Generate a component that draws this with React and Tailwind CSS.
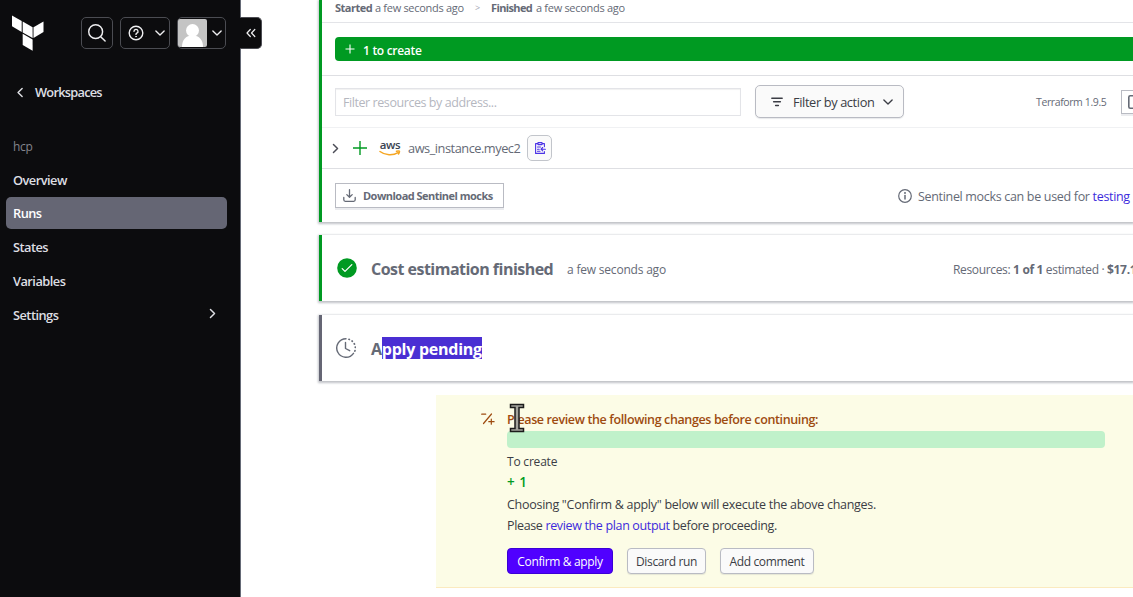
import React from "react";

const Chevron = ({ d, className, w = 1.8 }) => (
  <svg viewBox="0 0 16 16" className={className} fill="none" stroke="currentColor" strokeWidth={w} strokeLinecap="round" strokeLinejoin="round">
    <path d={d} />
  </svg>
);
const DOWN = "M2.500 5.300l5.500 5.500 5.500-5.500";
const LEFT = "M10 3L5 8l5 5";
const RIGHT = "M5.500 3l5 5-5 5";

function NavItem({ label, active, arrow }) {
  return (
    <div
      className={
        active
          ? "flex h-8 items-center justify-between rounded-[5px] bg-[#656674] pb-px pl-[7px] pr-2 text-white"
          : "flex h-8 items-center justify-between rounded-[5px] pl-[7px] pr-2 text-[#dedfe3]"
      }
    >
      <span className="pt-[3px] text-[12.8px] font-semibold tracking-[-0.520px]">{label}</span>
      {arrow && <Chevron d={RIGHT} className="size-[13px]" />}
    </div>
  );
}

function Sidebar() {
  return (
    <aside className="relative h-full w-[241px] shrink-0 border-r border-[#656a76] bg-[#0c0c0e]">
      <div className="flex h-[66px] items-center pl-3">
        <svg viewBox="0 0 32 37" className="h-[37px] w-8" fill="#fff">
          <path d="M0 0.500L9.700 6.100V16.900L0 11.300Z" />
          <path d="M10.700 6.400L20.600 12.200V23.100L10.700 17.400Z" />
          <path d="M21.500 12.200L31.500 6.400V17L21.500 23Z" />
          <path d="M10.700 18.800L20.600 24.600V35.800L10.700 30Z" />
        </svg>
        <div className="ml-[37px] flex h-8 w-8 items-center justify-center rounded-[5px] border border-[#4b4c52] text-[#efeff1]">
          <svg viewBox="0 0 20 20" className="size-[18px]" fill="none" stroke="currentColor" strokeWidth="1.600" strokeLinecap="round">
            <circle cx="8.500" cy="8.500" r="7.700" />
            <path d="M14.100 14.100L19 19" />
          </svg>
        </div>
        <div className="ml-[7px] flex h-8 w-[50px] items-center justify-between rounded-[5px] border border-[#4b4c52] pl-[7px] pr-[3px] text-[#efeff1]">
          <svg viewBox="0 0 16 16" className="size-4" fill="none" stroke="currentColor" strokeWidth="1.400" strokeLinecap="round">
            <circle cx="8" cy="8" r="6.800" />
            <path d="M6 6.300a2 2 0 1 1 2.800 1.900c-.6.300-.8.600-.8 1.200" />
            <circle cx="8" cy="11.600" r=".4" fill="currentColor" strokeWidth=".8" />
          </svg>
          <Chevron d={DOWN} className="size-3" />
        </div>
        <div className="ml-[7px] flex h-8 w-[49px] items-center justify-between rounded-[5px] border border-[#4b4c52] pr-[2px] text-[#efeff1]">
          <svg viewBox="0 0 29 28" className="h-7 w-[29px]">
            <rect width="29" height="28" rx="2" fill="#c4c4c4" />
            <circle cx="14.500" cy="11.500" r="6.500" fill="#fff" />
            <path d="M4 28c0-7 3.500-11.500 10.500-11.500S25 21 25 28Z" fill="#fff" />
          </svg>
          <Chevron d={DOWN} className="size-3" />
        </div>
      </div>
      <div className="absolute left-[240px] top-[17px] flex h-8 w-[22px] items-center justify-center rounded-r-[5px] border border-l-0 border-[#4b4c52] bg-[#0c0c0e] text-[#efeff1]">
        <svg viewBox="0 0 10 10" className="size-[10px]" fill="none" stroke="currentColor" strokeWidth="1.200" strokeLinecap="round" strokeLinejoin="round">
          <path d="M4.300 1.500L1 5l3.300 3.500M8.800 1.500L5.500 5l3.300 3.500" />
        </svg>
      </div>
      <div className="mt-[10px] flex h-8 items-center pl-[14px] text-[#dedfe3]">
        <Chevron d={LEFT} className="size-[13px]" />
        <span className="ml-[8px] pt-px text-[12.8px] font-semibold tracking-[-0.750px]">Workspaces</span>
      </div>
      <div className="mt-[22px] flex h-8 items-center pl-[13px] pt-px text-[12px] font-medium tracking-[-0.3px] text-[#83848c]">hcp</div>
      <nav className="mt-[1px] flex flex-col gap-[1.700px] pl-[6px] pr-[13px]">
        <NavItem label="Overview" />
        <NavItem label="Runs" active />
        <NavItem label="States" />
        <NavItem label="Variables" />
        <NavItem label="Settings" arrow />
      </nav>
    </aside>
  );
}

function PlanCard() {
  return (
    <section className="h-[222px] border-l-[3px] border-[#009a22] bg-white shadow-[0_1px_2px_1px_rgba(101,106,118,0.4)]">
      <div className="flex h-[23px] items-center border-b border-[#e3e4e8] pb-[6px] pl-[13px] text-[11px] text-[#656a76]">
        <b className="w-[37px] font-bold tracking-[-0.5px]">Started</b>
        <span className="ml-[3px] w-[89px] tracking-[-0.3px]">a few seconds ago</span>
        <span className="ml-[11px] w-[5px] text-[9px] text-[#a5a8b3]">&gt;</span>
        <b className="ml-[11px] w-[42px] font-bold tracking-[-0.620px]">Finished</b>
        <span className="ml-[3px] tracking-[-0.3px]">a few seconds ago</span>
      </div>
      <div className="h-[53px] border-b border-[#dedfe3] pl-[13px] pt-[14px]">
        <div className="flex h-6 items-center rounded-l-[4px] bg-[#009a22] pl-[10px] text-white">
          <svg viewBox="0 0 10 10" className="size-[10px]" stroke="#fff" strokeWidth="1.100">
            <path d="M5 .5v9M.5 5h9" />
          </svg>
          <span className="ml-[8px] pt-[3px] text-[12px] font-semibold tracking-[-0.3px]">1 to create</span>
        </div>
      </div>
      <div className="flex h-[52px] items-center border-b border-[#f0f1f3] pl-[13px]">
        <div className="flex h-7 w-[406px] shrink-0 items-center border border-[#e3e4e8] pl-[7px] pt-[3px] text-[12.500px] tracking-[-0.430px] text-[#b5b7bf] shadow-[inset_0_1px_1px_rgba(0,0,0,0.06)]">
          Filter resources by address...
        </div>
        <div className="ml-[14px] flex h-[33px] w-[149px] shrink-0 items-center rounded-[5px] border border-[#b9bbc3] bg-[#fafafa] pl-[15px] text-[#3b3d45] shadow-[0_1px_1px_rgba(101,106,118,0.15)]">
          <svg viewBox="0 0 12 10" className="h-[10px] w-3" stroke="currentColor" strokeWidth="1.400" strokeLinecap="round">
            <path d="M.8 1.200h10.400M2.600 4.800h6.800M4.600 8.500h2.800" />
          </svg>
          <span className="ml-[10px] w-[82px] pt-[3px] text-[12.800px] tracking-[-0.380px]">Filter by action</span>
          <Chevron d={DOWN} className="ml-[7px] size-3" />
        </div>
        <span className="ml-[132px] w-[72px] shrink-0 pt-[2px] text-[10.500px] tracking-[-0.390px] text-[#656a76]">Terraform 1.9.5</span>
        <div className="ml-[13px] flex h-6 w-[30px] shrink-0 items-center border border-[#b9bbc3] pl-[6px] text-[#656a76] shadow-[0_2px_0_#ebecef]">
          <svg viewBox="0 0 14 14" className="size-[14px]" fill="none" stroke="currentColor" strokeWidth="1.600">
            <rect x=".8" y=".8" width="12.400" height="12.400" rx="1.500" />
          </svg>
        </div>
      </div>
      <div className="flex h-[41px] items-center border-b border-[#dedfe3] pl-[7px] text-[#656a76]">
        <Chevron d={RIGHT} className="size-[13px] text-[#4b4d57]" />
        <svg viewBox="0 0 14 14" className="ml-[11px] size-[14px]" stroke="#009a22" strokeWidth="1.400">
          <path d="M7 0v14M0 7h14" />
        </svg>
        <div className="ml-[12px] flex w-[22px] flex-col items-center">
          <span className="text-[11.500px] font-semibold leading-[10px] tracking-[-0.3px] text-[#3a4352]">aws</span>
          <svg viewBox="0 0 22 6" className="h-[6px] w-[22px]" fill="none" stroke="#f5a623" strokeWidth="1.500" strokeLinecap="round">
            <path d="M1 1.500C6 5.500 14 5.800 19 2.600M17.500 1.200c1.600-.4 3-.3 3 .1s-.2 1.700-1 2.600" />
          </svg>
        </div>
        <span className="ml-[7px] w-[113px] pt-[2px] text-[12.800px] tracking-[-0.480px]">aws_instance.myec2</span>
        <div className="ml-[6px] flex h-[26px] w-[25px] items-center justify-center rounded-[5px] border border-[#c2c5cb] bg-[#fafafa] text-[#4b32e6]">
          <svg viewBox="0 0 12 12" className="size-3" fill="none" stroke="currentColor" strokeWidth="1.100" strokeLinecap="round" strokeLinejoin="round">
            <path d="M4 1.600H1.600v9.800h8.800V9.600M8 1.600h2.400v3M4 .6h4v2H4zM3.500 5h3M3.500 7.200h1.700M3.500 9.200h2.500M11.400 7.200H7M8.700 5.500L7 7.200l1.700 1.700" />
          </svg>
        </div>
      </div>
      <div className="flex h-[53px] items-center pl-[13px] text-[#656a76]">
        <div className="flex h-[25px] w-[169px] shrink-0 items-center border border-[#b9bbc3] pl-[7px] shadow-[0_2px_0_#ebecef]">
          <svg viewBox="0 0 13 13" className="size-[13px]" fill="none" stroke="currentColor" strokeWidth="1.300" strokeLinecap="round" strokeLinejoin="round">
            <path d="M6.500 .7v7.500M3.800 5.600l2.700 2.700 2.700-2.700M.8 8.500v2.300c0 .9.600 1.500 1.500 1.500h8.400c.9 0 1.500-.6 1.500-1.500V8.500" />
          </svg>
          <span className="ml-[7px] pt-px text-[11px] font-bold tracking-[-0.520px]">Download Sentinel mocks</span>
        </div>
        <svg viewBox="0 0 14 14" className="ml-[394px] size-[14px] shrink-0" fill="none" stroke="currentColor" strokeWidth="1.200" strokeLinecap="round">
          <circle cx="7" cy="7" r="6.300" />
          <path d="M7 6.600v3.300" strokeWidth="1.500" />
          <circle cx="7" cy="4.100" r=".4" />
        </svg>
        <span className="ml-[6px] pt-[3px] text-[12.500px] tracking-[-0.320px]">
          Sentinel mocks can be used for <a className="text-[#3d2bdc]">testing</a>
        </span>
      </div>
    </section>
  );
}

function CostCard() {
  return (
    <section className="mt-[13px] flex h-[66px] items-center border-l-[3px] border-[#009a22] bg-white pl-[15px] text-[#656a76] shadow-[0_1px_2px_1px_rgba(101,106,118,0.4)]">
      <svg viewBox="0 0 20 20" className="size-5 shrink-0">
        <circle cx="10" cy="10" r="9.800" fill="#009a22" />
        <path d="M5.200 10.600l2.800 2.800 6.800-6.800" fill="none" stroke="#fff" strokeWidth="1.300" strokeLinecap="round" strokeLinejoin="round" />
      </svg>
      <div className="flex w-[567px] shrink-0 items-center pl-[14px] pt-px">
        <h2 className="w-[182px] text-[16px] font-bold tracking-[-0.520px]">Cost estimation finished</h2>
        <span className="ml-[14px] pt-[2px] text-[12px] tracking-[-0.2px]">a few seconds ago</span>
      </div>
      <div className="ml-[29px] pt-[3px] text-[12px] tracking-[-0.340px]">
        Resources: <b>1 of 1</b> estimated · <b>$17.1</b>
      </div>
    </section>
  );
}

function ApplyCard() {
  return (
    <section className="mt-[14px] flex h-[66px] items-center border-l-[3px] border-[#656674] bg-white pl-[14px] text-[#656a76] shadow-[0_1px_2px_1px_rgba(101,106,118,0.4)]">
      <svg viewBox="0 0 20 20" className="size-5 shrink-0" fill="none" stroke="currentColor" strokeWidth="1.400" strokeLinecap="round" strokeLinejoin="round">
        <path d="M10 .8a9.200 9.200 0 1 0 7.500 14.500" />
        <path d="M13 1.300a9.200 9.200 0 0 1 5.300 13" strokeDasharray=".4 3.100" strokeWidth="1.700" />
        <path d="M9.500 4.500v6l4.200 2.200" />
      </svg>
      <h2 className="ml-[15px] flex text-[16px] font-bold leading-[22px] tracking-[-0.250px]">
        <span className="h-[22px] pt-px">A</span>
        <span className="h-[22px] bg-[#4a2fd3] pt-px text-white">pply pending</span>
      </h2>
    </section>
  );
}

function ReviewPanel() {
  return (
    <section className="ml-[117px] mt-[14px] h-[193px] border-b border-[#fbeabf] bg-[#fcfce6] pl-[45px] text-[#3b3d45]">
      <div className="flex h-[36px] items-end text-[#9e4b10]">
        <svg viewBox="0 0 14 12" className="mb-[6px] h-3 w-[14px]" stroke="currentColor" strokeWidth="1.200" strokeLinecap="round">
          <path d="M.7 1.200h4M10.500 1L2.500 10.500M10.300 6.200v5M7.800 8.700h5.300" />
        </svg>
        <span className="ml-[12px] flex h-6 items-center pt-[2px] text-[12.500px] font-semibold tracking-[-0.370px]">Please review the following changes before continuing:</span>
      </div>
      <div className="pl-[26px]">
        <div className="h-[17px] w-[598px] rounded-[4px] bg-[#c0f1ca]" />
        <div className="mt-[4px] flex h-5 items-center text-[12px] tracking-[-0.2px]">To create</div>
        <div className="flex h-5 items-center text-[13.500px] font-semibold tracking-[0.5px] text-[#009a22]">+ 1</div>
        <div className="mt-[2px] flex h-[21px] items-center pt-px text-[12.500px] tracking-[-0.280px]">Choosing "Confirm &amp; apply" below will execute the above changes.</div>
        <div className="h-[21px] text-[12.500px] leading-[21px] tracking-[-0.350px]">
          Please <a className="text-[#3d2bdc]">review the plan output</a> before proceeding.
        </div>
        <div className="mt-[12px] flex h-[26px] text-[12px] tracking-[-0.350px]">
          <button className="w-[106px] rounded-[4px] border border-[#3a00d6] bg-[#5000ff] pt-px text-white">Confirm &amp; apply</button>
          <button className="ml-[14px] w-[79px] rounded-[4px] border border-[#b9bbc3] bg-[#fafafa] pt-px shadow-[0_1px_1px_rgba(101,106,118,0.15)]">Discard run</button>
          <button className="ml-[14px] w-[94px] rounded-[4px] border border-[#b9bbc3] bg-[#fafafa] pt-px shadow-[0_1px_1px_rgba(101,106,118,0.15)]">Add comment</button>
        </div>
      </div>
    </section>
  );
}

export default function App() {
  return (
    <div className="relative flex h-[597px] w-[1133px] overflow-hidden whitespace-nowrap bg-white font-['Open_Sans','Noto_Sans',sans-serif]">
      <Sidebar />
      <main className="min-w-0 flex-1 pl-[78px]">
        <PlanCard />
        <CostCard />
        <ApplyCard />
        <ReviewPanel />
      </main>
      <svg viewBox="0 0 16 30" className="absolute left-[509px] top-[403px] h-[30px] w-4">
        <path d="M1.500 1.500h13v3h-4.500v21h4.500v3h-13v-3h4.500v-21h-4.500z" fill="#a3a39c" stroke="#1c1c1c" strokeWidth="1.500" />
      </svg>
    </div>
  );
}
